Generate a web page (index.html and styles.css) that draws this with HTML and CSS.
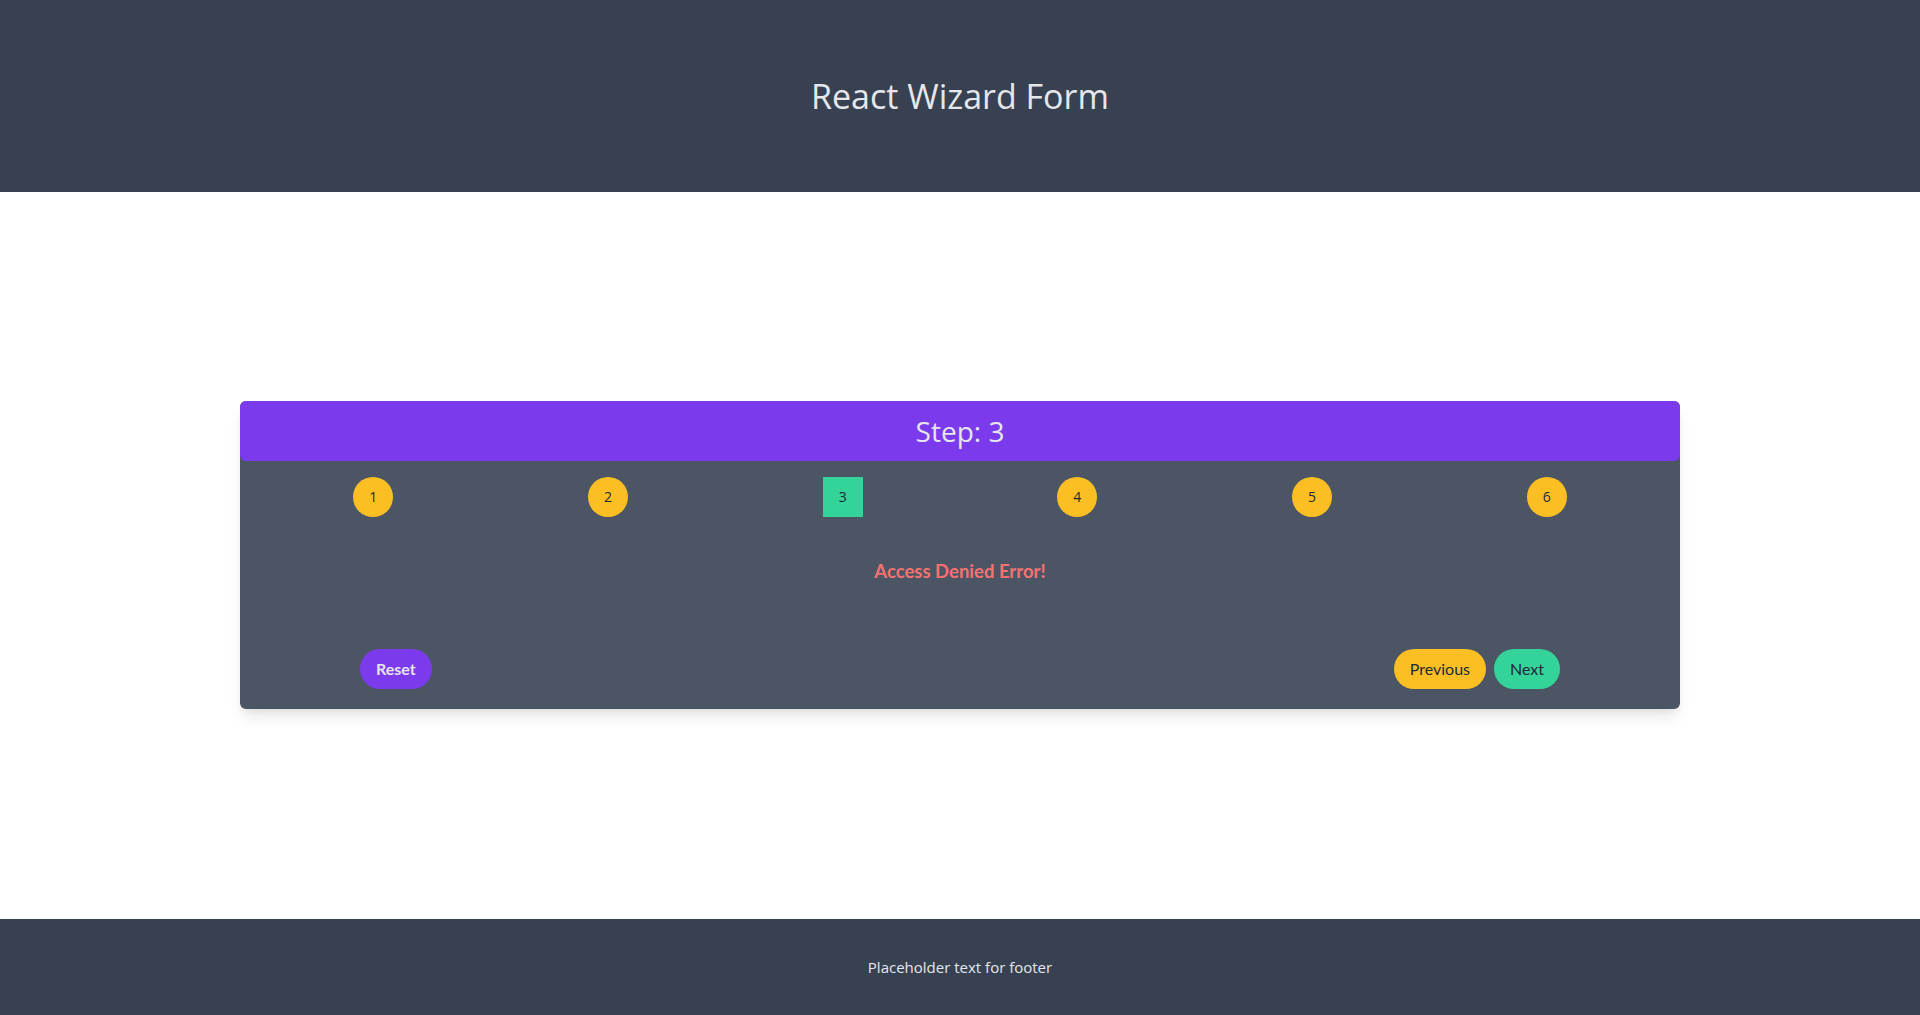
FILE: index.html
```html
<!DOCTYPE html>
<html lang="en">
<head>
<meta charset="utf-8">
<title>React Wizard Form</title>
<link rel="stylesheet" href="styles.css">
</head>
<body>
<div class="app">
  <header class="site-header">
    <h1 class="site-title">React Wizard Form</h1>
  </header>
  <main class="main">
    <section class="wizard">
      <div class="wizard-head">Step: 3</div>
      <div class="wizard-body">
        <ol class="steps">
          <li class="step"><span class="step-dot">1</span></li>
          <li class="step"><span class="step-dot">2</span></li>
          <li class="step"><span class="step-dot step-active">3</span></li>
          <li class="step"><span class="step-dot">4</span></li>
          <li class="step"><span class="step-dot">5</span></li>
          <li class="step"><span class="step-dot">6</span></li>
        </ol>
        <p class="error">Access Denied Error!</p>
        <div class="actions">
          <button class="btn btn-reset">Reset</button>
          <div class="nav-btns">
            <button class="btn btn-prev">Previous</button>
            <button class="btn btn-next">Next</button>
          </div>
        </div>
      </div>
    </section>
  </main>
  <footer class="site-footer">
    <p class="footer-text">Placeholder text for footer</p>
  </footer>
</div>
</body>
</html>
```

FILE: styles.css
```css
* { box-sizing: border-box; }
html, body { margin: 0; padding: 0; height: 100%; }
body {
  font-family: "Open Sans", "Noto Sans", sans-serif;
  background: #ffffff;
  color: #e5e7eb;
}
.app {
  display: flex;
  flex-direction: column;
  min-height: 1015px;
}
.site-header {
  height: 192px;
  background: #374151;
  display: flex;
  align-items: center;
  justify-content: center;
}
.site-title {
  margin: 0;
  font-size: 34px;
  font-weight: 400;
  line-height: 40px;
  color: #e5e7eb;
}
.main {
  flex: 1;
  display: flex;
  align-items: center;
  justify-content: center;
  padding-bottom: 2px;
}
.wizard {
  width: 1440px;
  background: #4b5563;
  border-radius: 6px;
  box-shadow: 0 10px 15px -3px rgba(0,0,0,0.1), 0 4px 6px -2px rgba(0,0,0,0.05);
}
.wizard-head {
  height: 60px;
  background: #7c3aed;
  border-radius: 6px;
  display: flex;
  align-items: center;
  justify-content: center;
  font-size: 28px;
  color: #e5e7eb;
}
.wizard-body {
  padding: 16px 16px 20px;
}
.steps {
  list-style: none;
  margin: 0;
  padding: 0;
  display: grid;
  grid-template-columns: repeat(6, 1fr);
}
.step {
  display: flex;
  justify-content: center;
}
.step-dot {
  width: 40px;
  height: 40px;
  border-radius: 50%;
  background: #fbbf24;
  color: #1f2937;
  display: flex;
  align-items: center;
  justify-content: center;
  font-size: 14px;
}
.step-active {
  border-radius: 0;
  background: #34d399;
}
.error {
  margin: 40px 0 0;
  text-align: center;
  font-family: Lato, "Open Sans", sans-serif;
  font-weight: 700;
  font-size: 18.5px;
  line-height: 28px;
  color: #f87171;
}
.actions {
  margin: 64px 104px 0;
  display: flex;
  justify-content: space-between;
  align-items: center;
}
.nav-btns {
  display: flex;
  gap: 8px;
}
.btn {
  font-family: Lato, "Open Sans", sans-serif;
  font-size: 16px;
  line-height: 24px;
  height: 40px;
  padding: 8px 16px;
  border: 0;
  border-radius: 9999px;
  cursor: pointer;
}
.btn-reset {
  background: #7c3aed;
  color: #e5e7eb;
  font-weight: 700;
}
.btn-prev {
  background: #fbbf24;
  color: #1f2937;
  font-weight: 400;
}
.btn-next {
  background: #34d399;
  color: #1f2937;
  font-weight: 400;
}
.site-footer {
  height: 96px;
  background: #374151;
  display: flex;
  align-items: center;
  justify-content: center;
}
.footer-text {
  margin: 0;
  font-size: 15px;
  color: #e5e7eb;
}
```
